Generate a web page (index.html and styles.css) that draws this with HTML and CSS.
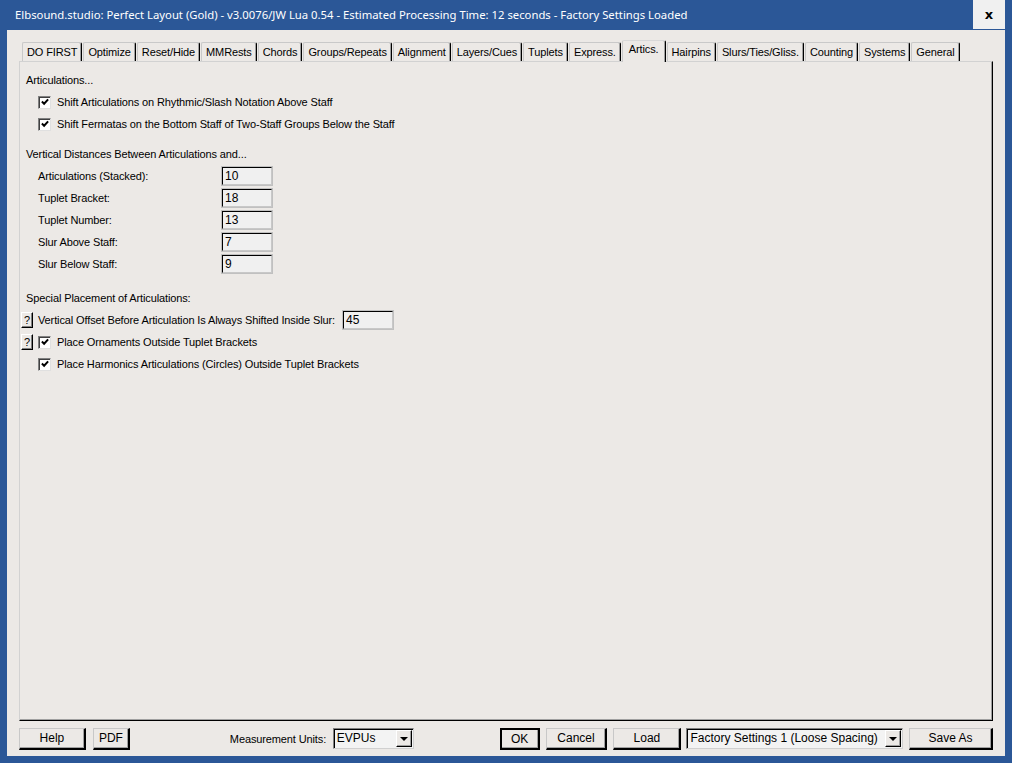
FILE: index.html
```html
<!DOCTYPE html>
<html lang="en">
<head>
    <meta charset="UTF-8">
    <title>Perfect Layout</title>
    <link rel="stylesheet" href="styles.css">
</head>
<body>
    <div class="window">
        <div class="titlebar">
            <span class="title">Elbsound.studio: Perfect Layout (Gold) - v3.0076/JW Lua 0.54 - Estimated Processing Time: 12 seconds - Factory Settings Loaded</span>
            <span class="close">x</span>
        </div>

        <div class="client">
            <div class="tabs">
                <div class="tab">DO FIRST</div>
                <div class="tab">Optimize</div>
                <div class="tab">Reset/Hide</div>
                <div class="tab">MMRests</div>
                <div class="tab">Chords</div>
                <div class="tab">Groups/Repeats</div>
                <div class="tab">Alignment</div>
                <div class="tab">Layers/Cues</div>
                <div class="tab">Tuplets</div>
                <div class="tab">Express.</div>
                <div class="tab active">Artics.</div>
                <div class="tab">Hairpins</div>
                <div class="tab">Slurs/Ties/Gliss.</div>
                <div class="tab">Counting</div>
                <div class="tab">Systems</div>
                <div class="tab">General</div>
            </div>

            <div class="panel">
                <div class="heading">Articulations...</div>
                <div class="row indent">
                    <span class="check"><svg viewBox="0 0 9 9"><polyline points="1,4 3.5,6.5 8,1.5"/></svg></span>
                    Shift Articulations on Rhythmic/Slash Notation Above Staff
                </div>
                <div class="row indent">
                    <span class="check"><svg viewBox="0 0 9 9"><polyline points="1,4 3.5,6.5 8,1.5"/></svg></span>
                    Shift Fermatas on the Bottom Staff of Two-Staff Groups Below the Staff
                </div>

                <div class="heading gap">Vertical Distances Between Articulations and...</div>
                <div class="field"><span class="label">Articulations (Stacked):</span><span class="edit">10</span></div>
                <div class="field"><span class="label">Tuplet Bracket:</span><span class="edit">18</span></div>
                <div class="field"><span class="label">Tuplet Number:</span><span class="edit">13</span></div>
                <div class="field"><span class="label">Slur Above Staff:</span><span class="edit">7</span></div>
                <div class="field"><span class="label">Slur Below Staff:</span><span class="edit">9</span></div>

                <div class="heading gap-lg">Special Placement of Articulations:</div>
                <div class="row help-row">
                    <span class="qbtn">?</span>
                    <span class="label wide">Vertical Offset Before Articulation Is Always Shifted Inside Slur:</span>
                    <span class="edit">45</span>
                </div>
                <div class="row help-row">
                    <span class="qbtn">?</span>
                    <span class="check"><svg viewBox="0 0 9 9"><polyline points="1,4 3.5,6.5 8,1.5"/></svg></span>
                    Place Ornaments Outside Tuplet Brackets
                </div>
                <div class="row indent">
                    <span class="check"><svg viewBox="0 0 9 9"><polyline points="1,4 3.5,6.5 8,1.5"/></svg></span>
                    Place Harmonics Articulations (Circles) Outside Tuplet Brackets
                </div>
            </div>

            <div class="footer">
                <span class="btn help">Help</span>
                <span class="btn pdf">PDF</span>
                <span class="units">Measurement Units:</span>
                <span class="combo units-combo">EVPUs<span class="arrow"></span></span>
                <span class="btn ok">OK</span>
                <span class="btn cancel">Cancel</span>
                <span class="btn load">Load</span>
                <span class="combo preset-combo">Factory Settings 1 (Loose Spacing)<span class="arrow"></span></span>
                <span class="btn save">Save As</span>
            </div>
        </div>
    </div>
</body>
</html>
```

FILE: styles.css
```css
body {
    margin: 0;
    font-family: "Liberation Sans", Arial, sans-serif;
    font-size: 11px;
    letter-spacing: -0.12px;
    color: #000;
}

.window {
    width: 1012px;
    height: 763px;
    background-color: #2b5797;
    padding: 0 7px 7px 7px;
    box-sizing: border-box;
    display: flex;
    flex-direction: column;
}

.titlebar {
    height: 30px;
    display: flex;
    align-items: center;
    justify-content: space-between;
    margin-right: -7px;
}

.title {
    color: #fff;
    font-family: "Noto Sans", sans-serif;
    font-size: 11.3px;
    letter-spacing: 0;
    padding-left: 8px;
    padding-bottom: 1px;
}

.close {
    width: 32px;
    height: 29px;
    margin-right: 7px;
    align-self: flex-start;
    background-color: #f0f0f0;
    display: flex;
    align-items: center;
    justify-content: center;
    font-family: "DejaVu Sans", sans-serif;
    font-weight: bold;
    font-size: 13px;
}

.client {
    flex: 1;
    background-color: #ece9e6;
    padding: 9px 12px 0 12px;
    display: flex;
    flex-direction: column;
}

.tabs {
    display: flex;
    align-items: flex-end;
    height: 22px;
    padding-left: 3px;
    position: relative;
    z-index: 1;
}

.tab {
    height: 18px;
    line-height: 18px;
    padding: 0 4px;
    border: 1px solid #c9c9c9;
    border-bottom: none;
    border-right: 1px solid #000;
    box-shadow: inset -1px 0 0 #a0a0a0;
    border-radius: 2px 2px 0 0;
    background-color: #ece9e6;
    white-space: nowrap;
    margin-right: 1px;
}

.tab.active {
    height: 21px;
    line-height: 17px;
    margin-bottom: -1px;
    padding: 0 6px;
    border-top-color: #d8d8d8;
}

.panel {
    flex: 1;
    border: 1px solid #d2d2d2;
    border-right-color: #000;
    border-bottom-color: #000;
    box-shadow: inset -1px -1px 0 #a0a0a0;
    padding: 7px 0 0 6px;
}

.heading {
    height: 22px;
    line-height: 22px;
}

.heading.gap {
    margin-top: 8px;
}

.heading.gap-lg {
    margin-top: 12px;
}

.row {
    height: 22px;
    display: flex;
    align-items: center;
}

.indent {
    padding-left: 12px;
}

.check {
    width: 11px;
    height: 11px;
    background-color: #fff;
    border: 1px solid #808080;
    border-right-color: #e0e0e0;
    border-bottom-color: #e0e0e0;
    box-shadow: inset 1px 1px 0 #404040;
    margin-right: 6px;
    display: flex;
    align-items: center;
    justify-content: center;
}

.check svg {
    width: 8px;
    height: 8px;
    fill: none;
    stroke: #000;
    stroke-width: 2.2;
}

.field {
    height: 22px;
    display: flex;
    align-items: center;
    padding-left: 12px;
}

.field .label {
    width: 184px;
}

.edit {
    width: 46px;
    height: 16px;
    line-height: 16px;
    padding-left: 2px;
    background-color: #f0f0f0;
    border: 1px solid #000;
    border-right-color: #c8c8c8;
    border-bottom-color: #c8c8c8;
    box-shadow: 0 0 0 1px #c0c0c0;
    font-size: 12px;
    letter-spacing: 0;
}

.help-row {
    margin-left: -5px;
}

.qbtn {
    width: 10px;
    height: 14px;
    line-height: 14px;
    text-align: center;
    background-color: #ece9e6;
    border: 1px solid #fff;
    border-right-color: #000;
    border-bottom-color: #000;
    box-shadow: inset -1px -1px 0 #808080;
    margin-right: 5px;
    font-size: 11px;
}

.label.wide {
    width: 305px;
}

.footer {
    height: 35px;
    display: flex;
    align-items: center;
}

.btn {
    height: 19px;
    line-height: 19px;
    text-align: center;
    border: 1px solid #c8c8c8;
    border-right: 2px solid #000;
    border-bottom: 2px solid #000;
    box-shadow: inset -1px -1px 0 #a0a0a0;
    background-color: #ece9e6;
    font-size: 12px;
    letter-spacing: 0;
}

.help { width: 64px; }
.pdf { width: 34px; margin-left: 7px; }
.units { margin-left: 100px; width: 103px; white-space: nowrap; }
.ok { width: 36px; margin-left: 86px; border: 2px solid #000; height: 18px; }
.cancel { width: 59px; margin-left: 6px; }
.load { width: 65px; margin-left: 6px; }
.save { width: 81px; margin-left: 6px; }

.combo {
    position: relative;
    height: 19px;
    line-height: 19px;
    padding-left: 3px;
    background-color: #f3f3f3;
    border: 1px solid #808080;
    border-right-color: #d0d0d0;
    border-bottom-color: #d0d0d0;
    box-shadow: inset 1px 1px 0 #000;
    font-size: 12px;
    letter-spacing: 0;
    white-space: nowrap;
}

.units-combo { width: 76px; }
.preset-combo { width: 212px; margin-left: 5px; }

.arrow {
    position: absolute;
    right: 1px;
    top: 1px;
    width: 14px;
    height: 15px;
    background-color: #ece9e6;
    border: 1px solid #fff;
    border-right-color: #000;
    border-bottom-color: #000;
    box-shadow: inset -1px -1px 0 #a0a0a0;
}

.arrow::after {
    content: "";
    position: absolute;
    left: 3px;
    top: 6px;
    border-left: 4px solid transparent;
    border-right: 4px solid transparent;
    border-top: 4px solid #000;
}
```
